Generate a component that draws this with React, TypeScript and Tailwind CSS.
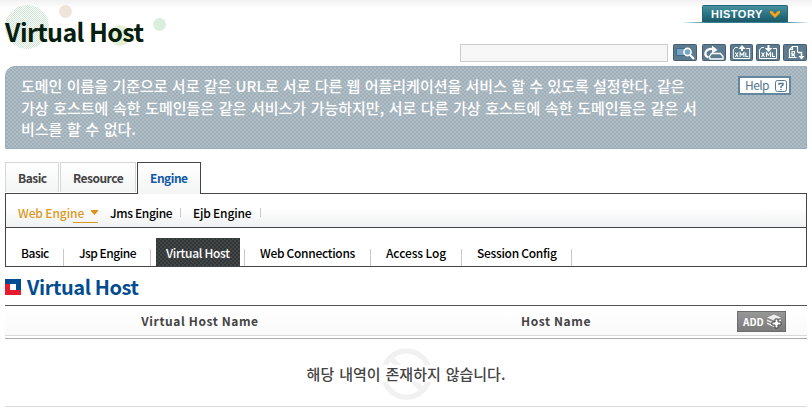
import React from 'react';

const actionFrame = 'h-[18px] shrink-0';

function ActionIcon({ kind, className }: { kind: string; className: string }) {
  return (
    <svg className={`${actionFrame} ${className}`} viewBox="0 0 24 18" preserveAspectRatio="none" fill="none">
      <rect x="0.5" y="0.5" width="23" height="16" rx="1" fill="#5d7b8e" stroke="#455f71" />
      {kind === 'search' && (
        <>
          <rect x="3.5" y="4.5" width="10" height="7" fill="#78a5c5" stroke="#426b88" />
          <circle cx="14.5" cy="8" r="3.6" fill="#78a5c5" stroke="#fff" strokeWidth="1.6" />
          <path d="M17 11l4 4" stroke="#fff" strokeWidth="2.2" />
        </>
      )}
      {kind === 'disk' && (
        <>
          <path d="M7.5 12.500l2-3h9l2.500 3v2.500h-13z" stroke="#fff" strokeWidth="1.3" fill="#5d7b8e" />
          <path d="M6.500 13.500C1 11 3 4.500 11 5" stroke="#fff" strokeWidth="2.2" />
          <path d="M10 1.500L15.500 6l-5.500 3.500z" fill="#fff" />
        </>
      )}
      {(kind === 'up' || kind === 'down') && (
        <>
          <path d="M8 3.5H5.5L3.5 6v8.500h17V4.5H17" stroke="#fff" />
          {kind === 'up' ? <path d="M12.5 1L8.8 5h2.7v2h2V5h2.8z" fill="#fff" /> : <path d="M12.5 8L8.8 4h2.7V1h2v3h2.8z" fill="#fff" />}
          <path d="M5.500 8.500l3 4.500M8.500 8.500l-3 4.500M10.500 13V8.500l2 2.500 2-2.500V13M16.500 8.500v4H19" stroke="#fff" strokeWidth="1.1" />
        </>
      )}
      {kind === 'report' && (
        <>
          <path d="M6.500 13.500v-8l3-3h5v6M6.500 5.500h3v-3M5.500 13.500h8" stroke="#fff" strokeWidth="1.1" />
          <path d="M9 12.500V7.500h2.500v2.500H9l3 2.500" stroke="#fff" strokeWidth="1.1" />
          <path d="M15 8.500h3.500V13" stroke="#fff" strokeWidth="1.5" />
          <path d="M15.500 12h6L18.500 15.500z" fill="#fff" />
        </>
      )}
    </svg>
  );
}

function Header() {
  return (
    <header className="relative flex h-[66px] justify-between bg-[linear-gradient(#f1f1f1,#ffffff_8px)]">
      <svg className="absolute left-0 top-0 h-[60px] w-[180px]" viewBox="0 0 180 60">
        <defs>
          <pattern id="mint" width="2" height="2" patternUnits="userSpaceOnUse">
            <path d="M0 0h1v1H0zM1 1h1v1H1z" fill="#cbe5d1" shapeRendering="crispEdges" />
          </pattern>
        </defs>
        <circle cx="27" cy="27" r="22" fill="url(#mint)" />
        <circle cx="65.5" cy="11.5" r="6.5" fill="#efe4da" />
        <circle cx="120" cy="35.500" r="10.500" fill="#e6f0d6" />
        <circle cx="159.500" cy="24.500" r="6.500" fill="#d9efdb" />
      </svg>
      <h1 className="relative ml-[5px] mt-[13px] h-9 whitespace-nowrap text-[25px] font-bold leading-9 tracking-[-0.6px] text-[#06200f]">Virtual Host</h1>
      <div className="flex flex-col items-end pr-[5px] pt-[5px]">
        <div className="flex h-[18px] w-[123px] flex-col">
          <div className="ml-[18px] flex h-[17px] w-[86px] items-center justify-between rounded-t-[2px] border border-b-0 border-[#246878] bg-[linear-gradient(#4690a0,#2b7484_50%,#1b5968)] pl-[8px] pr-[6px]">
            <span className="mt-px font-['Liberation_Sans',sans-serif] text-[11px] font-bold leading-[17px] tracking-[0.5px] text-white">HISTORY</span>
            <svg className="mt-px h-[7px] w-[12px] shrink-0" viewBox="0 0 12 7"><path d="M1 0h2l3 3 3-3h2v2L6 7 1 2z" fill="#f9a216" /></svg>
          </div>
          <div className="h-px bg-[linear-gradient(90deg,#d9f0f2,#3a8294_18%,#3a8294_82%,#d9f0f2)]" />
        </div>
        <div className="mt-[21px] flex h-[18px] items-start">
          <input className="mr-[5px] h-[18px] w-[208px] border border-[#cccccc] bg-[#f7f7f7] outline-none" />
          <ActionIcon kind="search" className="w-6" />
          <ActionIcon kind="disk" className="ml-[5px] w-6" />
          <ActionIcon kind="up" className="ml-1 w-[23px]" />
          <ActionIcon kind="down" className="ml-[3px] w-6" />
          <ActionIcon kind="report" className="ml-[3px] w-6" />
        </div>
      </div>
    </header>
  );
}

function Description() {
  return (
    <section className="mx-[5px] flex h-[83px] justify-between rounded-tl-[10px] border border-[#9aafbb] bg-[#b1bec6] bg-[conic-gradient(#9fafb9_25%,#b1bec6_0_50%,#9fafb9_0_75%,#b1bec6_0)] bg-size-[4px_4px] pl-[15px] pr-[15px] pt-[9px]">
      <p className="-mt-px whitespace-nowrap text-[15px] font-medium leading-[21.500px] text-white">
        <span className="block [word-spacing:0.9px]">도메인 이름을 기준으로 서로 같은 URL로 서로 다른 웹 어플리케이션을 서비스 할 수 있도록 설정한다. 같은</span>
        <span className="block [word-spacing:1.2px]">가상 호스트에 속한 도메인들은 같은 서비스가 가능하지만, 서로 다른 가상 호스트에 속한 도메인들은 같은 서</span>
        <span className="block [word-spacing:1.2px]">비스를 할 수 없다.</span>
      </p>
      <button className="flex h-[19px] w-[53px] shrink-0 items-center justify-between border-2 border-[#64869f] bg-white pl-[5px] pr-[2px] text-[12px] leading-[15px] text-[#55788f]">
        <span className="-mt-[3px] tracking-[-0.6px]">Help</span>
        <svg className="h-3 w-3" viewBox="0 0 12 12" fill="none" stroke="#55788f">
          <rect x="0.500" y="0.500" width="11" height="11" rx="2" />
          <path d="M4 5V3.500h4V5L6 6.500V8M6 9v1" strokeWidth="1.400" />
        </svg>
      </button>
    </section>
  );
}

function Divider({ className }: { className: string }) {
  return <i className={`w-px shrink-0 bg-[#c9c9c9] ${className}`} />;
}

function Navigation() {
  return (
    <nav className="mx-[5px] mt-[13px] text-[12px] font-medium text-black">
      <div className="flex h-8 items-start font-bold tracking-[-0.5px] text-[#444]">
        <div className="h-[30px] w-[54px] border border-b-0 border-[#d6d6d6] bg-linear-to-b from-white to-[#f3f4f4] pl-3 leading-[30px]">Basic</div>
        <div className="ml-px h-[30px] w-[76px] border border-b-0 border-[#d6d6d6] bg-linear-to-b from-white to-[#f3f4f4] pl-3 leading-[30px]">Resource</div>
        <div className="relative ml-px h-8 w-16 border border-b-0 border-[#444] bg-linear-to-b from-white to-[#f3f4f4] pl-3 leading-[30px] text-[#1159a6]">Engine</div>
      </div>
      <div className="-mt-px h-[35px] border border-[#444] bg-linear-to-b from-white from-40% to-[#f0f1f2]">
        <div className="flex h-[33px] items-start whitespace-nowrap leading-[38px] tracking-[-0.35px]">
          <div className="relative ml-3 w-[80px] tracking-[-0.1px] text-[#dc981e]">
            Web Engine
            <svg className="absolute right-0 top-4 h-[5px] w-[7px]" viewBox="0 0 7 5"><path d="M0 0h7v1L3.500 5 0 1z" fill="#dd8e13" /></svg>
            <i className="absolute right-0 top-[28px] h-px w-[25px] bg-[#dc981e]" />
          </div>
          <span className="ml-3 w-[70px]">Jms Engine</span>
          <Divider className="mt-[14px] h-[9px]" />
          <span className="ml-3 w-[67px] tracking-[-0.2px]">Ejb Engine</span>
          <Divider className="mt-[14px] h-[9px]" />
        </div>
      </div>
      <div className="flex h-[39px] items-start whitespace-nowrap border border-t-0 border-[#444] bg-white leading-[49px] tracking-[-0.3px]">
        <span className="ml-[15px] w-[42px] tracking-[-0.5px]">Basic</span><Divider className="mt-[21px] h-[17px]" />
        <span className="ml-[15px] w-[71px] tracking-[-0.5px]">Jsp Engine</span><Divider className="mt-[21px] h-[17px]" />
        <div className="ml-[5px] mt-[10px] h-[28px] w-[84px] bg-[#3e3e3e] bg-[conic-gradient(#30373b_25%,#454545_0_50%,#30373b_0_75%,#454545_0)] bg-size-[4px_4px] pl-[10px] leading-[29px] text-white">Virtual Host</div>
        <Divider className="ml-1 mt-[21px] h-[17px]" />
        <span className="ml-[15px] w-[110px]">Web Connections</span><Divider className="mt-[21px] h-[17px]" />
        <span className="ml-[15px] w-[75px] tracking-[-0.1px]">Access Log</span><Divider className="mt-[21px] h-[17px]" />
        <span className="ml-[15px] w-[94px]">Session Config</span><Divider className="mt-[21px] h-[17px]" />
      </div>
    </nav>
  );
}

function AddButton() {
  return (
    <button className="flex h-[21px] w-[49px] items-center border border-[#6d6d6d] bg-linear-to-b from-[#979797] to-[#7b7b7b] pl-[5px] text-[10px] font-bold text-white">
      <span className="w-[24px] text-left">ADD</span>
      <svg className="h-[15px] w-[16px] shrink-0" viewBox="0 0 16 15">
        <path d="M0 3.500L7 .5l7 3-7 3zM0 5.500l7 3 7-3v1.500l-7 3-7-3zM0 8.500l7 3 7-3V10l-7 3-7-3z" fill="#eee" />
        <path d="M8 5h3v3h3v3h-3v3H8v-3H5V8h3z" fill="#fff" stroke="#444" />
      </svg>
    </button>
  );
}

function HostTable() {
  return (
    <main className="mx-[5px]">
      <h2 className="flex h-[38px] items-start whitespace-nowrap text-[20px] font-bold leading-[39px] tracking-[-0.4px] text-[#034c8f]">
        <svg className="mr-[6px] mt-[12px] h-4 w-4" viewBox="0 0 16 16" shapeRendering="crispEdges">
          <path d="M0 0h16v11H0z" fill="#034c8f" /><path d="M0 5h5v6h11v5H0z" fill="#e61b2c" /><path d="M5 5h6v6H5z" fill="#fff" />
        </svg>
        Virtual Host
      </h2>
      <div className="flex h-[31px] items-start border-b border-t border-b-[#d9d9d9] border-t-[#555] bg-linear-to-b from-white to-[#fafafa] text-[12px] font-bold leading-[30px] text-[#444]">
        <span className="w-[390px] text-center tracking-[0.6px]">Virtual Host Name</span>
        <span className="w-[322px] text-center tracking-[0.6px]">Host Name</span>
        <div className="ml-5 mt-[5px]"><AddButton /></div>
      </div>
      <div className="mt-[2px] flex h-[69px] items-start justify-center border-b border-t border-b-[#ddd] border-t-[#aaa]">
        <div className="relative mt-2 flex h-[55px] w-[220px] items-center justify-center">
          <svg className="absolute left-[84px] top-0 h-[54px] w-[53px]" viewBox="0 0 55 55" fill="none" stroke="#f1f1f1" strokeWidth="5.500">
            <circle cx="27.500" cy="27.500" r="24" /><path d="M11 11l33 33" />
          </svg>
          <p className="relative -mt-[2px] h-[17px] whitespace-nowrap bg-white text-[15px] font-medium leading-[17px] text-[#444] [word-spacing:1.6px]">해당 내역이 존재하지 않습니다.</p>
        </div>
      </div>
    </main>
  );
}

export default function App() {
  return (
    <div className="h-[412px] w-[812px] overflow-hidden bg-white font-['Noto_Sans_CJK_KR',sans-serif]">
      <Header />
      <Description />
      <Navigation />
      <HostTable />
    </div>
  );
}
